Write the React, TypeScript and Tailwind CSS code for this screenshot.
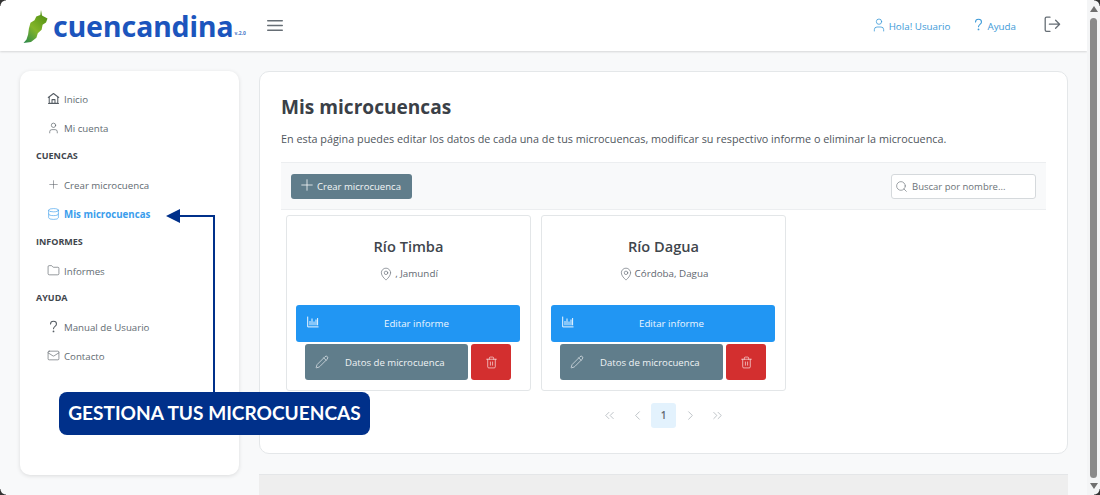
import React from "react";
import { User, Plus, Database, Folder, Mail, Pencil, Trash2, MapPin, Search, ChevronsLeft, ChevronLeft, ChevronRight, ChevronsRight } from "lucide-react";

function HomeIcon() {
  return (
    <svg width="13" height="13" viewBox="0 0 14 14" fill="none" stroke="currentColor" strokeWidth="1.1" strokeLinejoin="round">
      <path d="M1 6.2 7 1.6l6 4.6" />
      <path d="M2.4 5.4v6.8h9.2V5.4" />
      <path d="M1.2 12.4h11.6" />
      <path d="M5.4 12.2V8.2h3.2v4" />
    </svg>
  );
}

function Question({ size = 13 }: { size?: number }) {
  return (
    <svg width={size} height={size} viewBox="0 0 14 14" fill="none" stroke="currentColor" strokeWidth="1.15" strokeLinecap="round">
      <path d="M3.8 4.4C3.8 2.6 5.2 1.3 7 1.3s3.2 1.3 3.2 3c0 2.6-3.2 2.6-3.2 5.2" />
      <circle cx="7" cy="12.3" r=".4" fill="currentColor" />
    </svg>
  );
}

function Chart() {
  return (
    <svg width="12" height="12" viewBox="0 0 12 12" fill="none" stroke="currentColor" strokeWidth="1">
      <path d="M.7.6v10.3h10.8" />
      <path d="M3 9.3V5M5 9.3V2.5M7 9.3V5.5M9 9.3V3.5M10.6 9.3V2" />
    </svg>
  );
}

function SignOut() {
  return (
    <svg width="17" height="17" viewBox="0 0 17 17" fill="none" stroke="currentColor" strokeWidth="1.3" strokeLinecap="round" strokeLinejoin="round">
      <path d="M6 1.2H2.6c-.8 0-1.4.6-1.4 1.4v11.3c0 .8.6 1.4 1.4 1.4H6" />
      <path d="M5.4 8.2h10.2M11.6 4.2l4 4-4 4" />
    </svg>
  );
}

function Burger() {
  return (
    <svg width="16" height="11" viewBox="0 0 16 11" stroke="currentColor" strokeWidth="1.4" strokeLinecap="round" className="ml-[21px] text-[#666e75]">
      <path d="M.7.8h14.6M.7 5.5h14.6M.7 10.2h14.6" />
    </svg>
  );
}

function Leaf() {
  return (
    <svg width="26" height="36" viewBox="0 0 26 36" className="shrink-0">
      <defs>
        <linearGradient id="lf" x1="0.8" y1="0" x2="0.1" y2="1">
          <stop offset="0" stopColor="#4f8f12" />
          <stop offset="0.55" stopColor="#84b52a" />
          <stop offset="1" stopColor="#2f8a4a" />
        </linearGradient>
      </defs>
      <path
        d="M18 2l1 5.4 5.5 3-1.5 4-3.4 2.4-1 5-3.8 3.4-1.4 4.6L8 34 0.5 35l3-3.6 1.6-5 .8-6 1.6-5.6 4-2.6 1.8-3.8 4-1.4z"
        fill="url(#lf)"
      />
    </svg>
  );
}

function NavItem({ icon, label, active }: { icon: React.ReactNode; label: string; active?: boolean }) {
  return (
    <div className={`flex h-[29px] items-center pl-[27px] text-[9.7px] ${active ? "font-bold text-[#3a9dec]" : "text-[#636b72]"}`}>
      <span className={`mr-1 flex w-[13px] -translate-y-px justify-center ${active ? "text-[#3a9dec]" : "text-[#555c63]"}`}>{icon}</span>
      <span className="translate-y-[0.5px]">{label}</span>
    </div>
  );
}

function Section({ label, short }: { label: string; short?: boolean }) {
  return <div className={`flex items-center pb-[3px] pl-4 text-[9px] font-bold text-[#3f464d] ${short ? "h-[27px]" : "h-[28px]"}`}>{label}</div>;
}

function Card({ title, place }: { title: string; place: string }) {
  return (
    <div className="flex h-[176px] w-[245px] flex-col items-center rounded-[3px] border border-[#e3e6e8] bg-white">
      <div className="mt-[20px] text-[14.6px] font-semibold leading-5 text-[#3f464d]">{title}</div>
      <div className="mt-[8px] flex h-[20px] items-center gap-[2px] text-[9.8px] text-[#5f6770]">
        <MapPin size={14} strokeWidth={1.1} />
        <span>{place}</span>
      </div>
      <div className="ml-[9px] mt-[21px] flex h-[37px] w-[224px] items-center self-start rounded-[3px] bg-[#2196f3] text-[9.7px] text-[#eef7ff]">
        <span className="ml-[11px] w-[12px] -translate-y-[2px]"><Chart /></span>
        <span className="flex-1 translate-y-px pr-[6px] text-center">Editar informe</span>
      </div>
      <div className="ml-[9px] mt-[2px] flex w-[224px] justify-center gap-[3px] self-start">
        <div className="flex h-[36px] w-[163px] items-center rounded-[3px] bg-[#607d8b] text-[9.6px] text-[#eef2f4]">
          <Pencil size={14} strokeWidth={1.15} className="ml-[10px]" />
          <span className="ml-[16px] translate-y-px">Datos de microcuenca</span>
        </div>
        <div className="flex h-[36px] w-[40px] items-center justify-center rounded-[3px] bg-[#d32f2f] text-[#fbe9e9]">
          <Trash2 size={13} strokeWidth={1.25} />
        </div>
      </div>
    </div>
  );
}

export default function App() {
  return (
    <div className="relative flex h-[495px] w-[1100px] overflow-hidden bg-[#f8f9fa] font-['Open_Sans',sans-serif]">
      <div className="flex min-w-0 flex-1 flex-col">
        <header className="flex h-[51px] shrink-0 items-center bg-white pl-[23px] shadow-[0_1px_2px_rgba(0,0,0,0.14)]">
          <Leaf />
          <span className="ml-[4px] translate-y-px font-['Noto_Sans',sans-serif] text-[28.4px] font-bold leading-none text-[#1c55bd]">cuencandina</span>
          <span className="ml-px mt-[17px] text-[5px] font-bold text-[#4a78c8]">v.2.0</span>
          <Burger />
          <div className="ml-auto flex items-center text-[9.8px] text-[#3d9ad8]">
            <User size={16} strokeWidth={1.2} className="-translate-y-[1px]" />
            <span className="ml-[2px] translate-y-[2px]">Hola! Usuario</span>
            <span className="ml-[22px] -translate-y-[1px]"><Question size={13} /></span>
            <span className="ml-[2px] translate-y-[2px]">Ayuda</span>
            <span className="ml-[28px] mr-[26px] -translate-y-[1px] text-[#666e75]"><SignOut /></span>
          </div>
        </header>

        <div className="flex min-h-0 flex-1 gap-[20px] pl-[20px] pr-[19px] pt-[20px]">
          <aside className="h-[404px] w-[219px] shrink-0 rounded-[10px] bg-white pt-[14px] shadow-[0_1px_4px_rgba(0,0,0,0.12)]">
            <NavItem icon={<HomeIcon />} label="Inicio" />
            <NavItem icon={<User size={16} strokeWidth={1.2} />} label="Mi cuenta" />
            <Section label="CUENCAS" />
            <NavItem icon={<Plus size={19} strokeWidth={1} />} label="Crear microcuenca" />
            <NavItem active icon={<Database size={16} strokeWidth={1.15} />} label="Mis microcuencas" />
            <Section label="INFORMES" />
            <NavItem icon={<Folder size={15} strokeWidth={1.15} />} label="Informes" />
            <Section label="AYUDA" short />
            <NavItem icon={<Question size={13} />} label="Manual de Usuario" />
            <NavItem icon={<Mail size={15} strokeWidth={1.15} />} label="Contacto" />
          </aside>

          <main className="min-w-0 flex-1">
            <div className="h-[383px] rounded-[10px] border border-[#e4e7e9] bg-white px-[21px] pt-[21px]">
              <h1 className="text-[19.1px] font-bold leading-[28px] text-[#3a4047]">Mis microcuencas</h1>
              <p className="mt-[10px] text-[10.82px] leading-[16px] text-[#4f565d]">
                En esta página puedes editar los datos de cada una de tus microcuencas, modificar su respectivo informe o eliminar la microcuenca.
              </p>
              <div className="mt-[15px] flex h-[48px] items-center justify-between border-y border-[#eceef0] bg-[#f8f9fa] px-[10px]">
                <div className="flex h-[25px] w-[121px] items-center rounded-[3px] bg-[#607d8b] pl-[7px] text-[9.55px] text-[#f2f5f6]">
                  <Plus size={18} strokeWidth={1.1} className="-translate-y-px" />
                  <span className="ml-[1px] translate-y-px">Crear microcuenca</span>
                </div>
                <div className="flex h-[25px] w-[145px] items-center rounded-[3px] border border-[#d5d9dc] bg-white pl-[3px] text-[9.5px] text-[#6b7278]">
                  <Search size={13} strokeWidth={1.2} />
                  <span className="ml-[4px] translate-y-px">Buscar por nombre...</span>
                </div>
              </div>
              <div className="ml-[5px] mt-[5px] flex gap-[10px]">
                <Card title="Río Timba" place=", Jamundí" />
                <Card title="Río Dagua" place="Córdoba, Dagua" />
              </div>
              <div className="mt-[12px] flex h-[25px] items-center justify-center pr-[1px] text-[#aab0b5]">
                <ChevronsLeft size={15} strokeWidth={1.2} />
                <ChevronLeft size={15} strokeWidth={1.2} className="ml-[13px]" />
                <div className="ml-[6.5px] flex h-[25px] w-[25px] items-center justify-center rounded-[3px] bg-[#e3f2fd] text-[10px] font-semibold text-[#5f6770]">1</div>
                <ChevronRight size={15} strokeWidth={1.2} className="ml-[6.5px]" />
                <ChevronsRight size={15} strokeWidth={1.2} className="ml-[12px]" />
              </div>
            </div>
            <div className="mt-[20px] h-[40px] border-t border-[#e4e6e8] bg-[#eeeeee]" />
          </main>
        </div>
      </div>

      {/* window scrollbar */}
      <div className="flex w-[13px] shrink-0 flex-col items-center bg-[#f4f5f6]">
        <div className="mt-[6px] h-0 w-0 border-x-[4px] border-b-[6px] border-x-transparent border-b-[#6f6f6f]" />
        <div className="mt-[6px] h-[460px] w-[7px] rounded-[4px] bg-[#8a8a8a]" />
        <div className="mb-[6px] mt-auto h-0 w-0 border-x-[4px] border-t-[6px] border-x-transparent border-t-[#6f6f6f]" />
      </div>

      {/* window corners */}
      <div className="absolute left-0 top-0 h-[6px] w-[6px] bg-[radial-gradient(circle_at_100%_100%,transparent_5px,#333_6px)]" />
      <div className="absolute right-0 top-0 h-[6px] w-[6px] bg-[radial-gradient(circle_at_0_100%,transparent_5px,#333_6px)]" />
      <div className="absolute bottom-0 right-0 h-[6px] w-[6px] bg-[radial-gradient(circle_at_0_0,transparent_5px,#333_6px)]" />
      <div className="absolute bottom-0 left-0 h-[6px] w-[6px] bg-[radial-gradient(circle_at_100%_0,transparent_5px,#333_6px)]" />

      {/* annotation */}
      <div className="absolute left-[180px] top-[215px] h-[2px] w-[35px] bg-[#00308a]" />
      <div className="absolute left-[213px] top-[215px] h-[178px] w-[2px] bg-[#00308a]" />
      <div className="absolute left-[166px] top-[209px] h-0 w-0 border-y-[7px] border-r-[14px] border-y-transparent border-r-[#00308a]" />
      <div className="absolute left-[59px] top-[392px] flex h-[43px] w-[311px] items-center justify-center rounded-[8px] bg-[#00308a] font-['Lato',sans-serif] text-[19.1px] font-bold text-white">
        GESTIONA TUS MICROCUENCAS
      </div>
    </div>
  );
}
